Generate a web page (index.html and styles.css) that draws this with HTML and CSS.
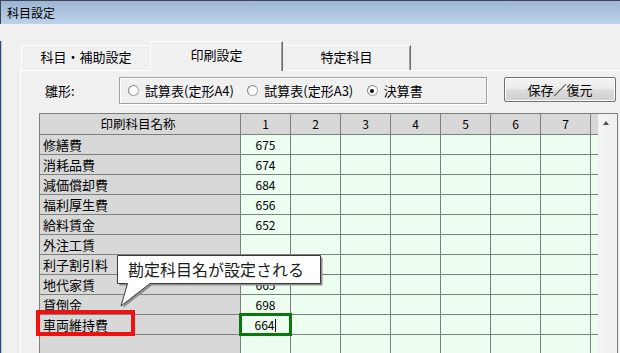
FILE: index.html
```html
<!DOCTYPE html>
<html lang="ja">
<head>
<meta charset="utf-8">
<title>科目設定</title>
<link rel="stylesheet" href="styles.css">
</head>
<body>
<div class="window">
  <div class="titlebar">科目設定</div>
  <div class="client">
    <div class="tabs">
      <div class="tab tab-first">科目・補助設定</div>
      <div class="tab tab-active">印刷設定</div>
      <div class="tab tab-last">特定科目</div>
    </div>
    <div class="panel">
      <div class="options">
        <div class="opt-label">雛形:</div>
        <div class="radio-group">
          <div class="radio"><span class="circle"></span>試算表(定形A4)</div>
          <div class="radio"><span class="circle"></span>試算表(定形A3)</div>
          <div class="radio"><span class="circle checked"></span>決算書</div>
        </div>
        <div class="button">保存／復元</div>
      </div>
      <div class="gridframe">
        <div class="cells">
          <div class="row head">
            <div class="c name">印刷科目名称</div>
            <div class="c">1</div><div class="c">2</div><div class="c">3</div><div class="c">4</div><div class="c">5</div><div class="c">6</div><div class="c">7</div><div class="c part"></div>
          </div>
          <div class="row"><div class="c name">修繕費</div><div class="c">675</div><div class="c"></div><div class="c"></div><div class="c"></div><div class="c"></div><div class="c"></div><div class="c"></div><div class="c part"></div></div>
          <div class="row"><div class="c name">消耗品費</div><div class="c">674</div><div class="c"></div><div class="c"></div><div class="c"></div><div class="c"></div><div class="c"></div><div class="c"></div><div class="c part"></div></div>
          <div class="row"><div class="c name">減価償却費</div><div class="c">684</div><div class="c"></div><div class="c"></div><div class="c"></div><div class="c"></div><div class="c"></div><div class="c"></div><div class="c part"></div></div>
          <div class="row"><div class="c name">福利厚生費</div><div class="c">656</div><div class="c"></div><div class="c"></div><div class="c"></div><div class="c"></div><div class="c"></div><div class="c"></div><div class="c part"></div></div>
          <div class="row"><div class="c name">給料賃金</div><div class="c">652</div><div class="c"></div><div class="c"></div><div class="c"></div><div class="c"></div><div class="c"></div><div class="c"></div><div class="c part"></div></div>
          <div class="row"><div class="c name">外注工賃</div><div class="c"></div><div class="c"></div><div class="c"></div><div class="c"></div><div class="c"></div><div class="c"></div><div class="c"></div><div class="c part"></div></div>
          <div class="row"><div class="c name">利子割引料</div><div class="c"></div><div class="c"></div><div class="c"></div><div class="c"></div><div class="c"></div><div class="c"></div><div class="c"></div><div class="c part"></div></div>
          <div class="row"><div class="c name">地代家賃</div><div class="c">665</div><div class="c"></div><div class="c"></div><div class="c"></div><div class="c"></div><div class="c"></div><div class="c"></div><div class="c part"></div></div>
          <div class="row"><div class="c name">貸倒金</div><div class="c">698</div><div class="c"></div><div class="c"></div><div class="c"></div><div class="c"></div><div class="c"></div><div class="c"></div><div class="c part"></div></div>
          <div class="row"><div class="c name">車両維持費</div><div class="c">664<span class="caret"></span></div><div class="c"></div><div class="c"></div><div class="c"></div><div class="c"></div><div class="c"></div><div class="c"></div><div class="c part"></div></div>
          <div class="row"><div class="c name"></div><div class="c"></div><div class="c"></div><div class="c"></div><div class="c"></div><div class="c"></div><div class="c"></div><div class="c"></div><div class="c part"></div></div>
          <div class="row"><div class="c name"></div><div class="c"></div><div class="c"></div><div class="c"></div><div class="c"></div><div class="c"></div><div class="c"></div><div class="c"></div><div class="c part"></div></div>
        </div>
        <div class="scrollbar"><span class="arrow-up"></span></div>
      </div>
    </div>
  </div>

  <div class="callout">
    <svg class="callout-shape" width="212" height="56" viewBox="0 0 212 56">
      <path d="M2.5,2.5 H205.5 V30.5 H35 L6,53 L12.5,30.5 H2.5 Z" fill="#8f8f8f"/>
      <path d="M0.5,0.5 H203.5 V28.5 H33 L4,51 L10.5,28.5 H0.5 Z" fill="#ffffff" stroke="#3a3a3a" stroke-width="1"/>
    </svg>
    <span class="callout-text">勘定科目名が設定される</span>
  </div>
  <div class="mark mark-red"></div>
  <div class="mark mark-green"></div>
</div>
</body>
</html>
```

FILE: styles.css
```css
html, body {
  margin: 0;
  padding: 0;
  overflow: hidden;
  background: #f0f0f0;
}

body {
  font-family: "Noto Sans CJK JP", "Noto Sans", sans-serif;
  color: #000;
}

.window {
  position: relative;
  width: 620px;
  height: 353px;
  overflow: hidden;
  background: #f0f0f0;
}

.titlebar {
  box-sizing: border-box;
  height: 24px;
  border-top: 1px solid #3c4656;
  border-left: 1px solid #3c4656;
  background: linear-gradient(#9cb5d2, #bdd2eb);
  font-size: 12px;
  line-height: 23px;
  padding-left: 6px;
}

.client {
  height: 329px;
  border-left: 1px solid #34496a;
  box-shadow: inset 1px 0 0 #b4c8e2;
}

.tabs {
  position: relative;
  z-index: 1;
  display: flex;
  align-items: flex-end;
  height: 30px;
  margin-top: 17px;
  margin-bottom: -1px;
  padding-left: 20px;
}

.tab {
  box-sizing: border-box;
  height: 25px;
  margin-bottom: 1px;
  border-top: 1px solid #ffffff;
  border-left: 1px solid #ffffff;
  background: #f0f0f0;
  font-size: 13px;
  line-height: 22px;
  text-align: center;
}

.tab-first {
  width: 129px;
}

.tab-active {
  width: 133px;
  height: 30px;
  margin-bottom: 0;
  line-height: 26px;
  border-right: 1px solid #6a6a6a;
  box-shadow: inset -1px 0 0 #a0a0a0;
}

.tab-last {
  width: 128px;
  border-left: none;
  border-right: 1px solid #6a6a6a;
  box-shadow: inset -1px 0 0 #a0a0a0;
}

.panel {
  margin-left: 19px;
  height: 300px;
  border-left: 1px solid #ffffff;
  border-top: 1px solid #ffffff;
  padding-top: 6px;
}

.options {
  display: flex;
  height: 27px;
}

.opt-label {
  box-sizing: border-box;
  width: 98px;
  padding-left: 24px;
  font-size: 13px;
  line-height: 27px;
}

.radio-group {
  box-sizing: border-box;
  width: 368px;
  height: 27px;
  border: 1px solid #a0a0a0;
  box-shadow: inset 1px 1px 0 #ffffff, 1px 1px 0 #ffffff;
  display: flex;
  align-items: center;
  padding-left: 8px;
}

.radio {
  width: 129px;
  display: flex;
  align-items: center;
  font-size: 13px;
  line-height: 18px;
  white-space: nowrap;
}

.circle {
  position: relative;
  box-sizing: border-box;
  width: 11px;
  height: 11px;
  margin-right: 6px;
  border-radius: 50%;
  border: 1px solid #a8a8a8;
  border-top-color: #8a8a8a;
  border-left-color: #8a8a8a;
  background: radial-gradient(circle at 60% 60%, #ffffff 40%, #e2e2e2 100%);
}

.circle.checked::after {
  content: "";
  position: absolute;
  left: 2.5px;
  top: 2.5px;
  width: 4px;
  height: 4px;
  border-radius: 50%;
  background: #111;
}

.button {
  box-sizing: border-box;
  margin-left: 17px;
  width: 112px;
  height: 25px;
  border: 1px solid #707070;
  border-radius: 2px;
  box-shadow: inset 0 0 0 1px #fbfbfb;
  background: linear-gradient(#f3f3f3 0%, #ebebeb 48%, #dcdcdc 52%, #cfcfcf 100%);
  font-size: 13px;
  line-height: 23px;
  text-align: center;
}

.gridframe {
  display: flex;
  width: 577px;
  margin-top: 9px;
  margin-left: 18px;
  border: 1px solid #7b817b;
  border-bottom: none;
}

.cells {
  width: 558px;
}

.row {
  display: flex;
  height: 20px;
}

.row.head {
  height: 21px;
}

.c {
  box-sizing: border-box;
  width: 50px;
  flex: none;
  border-right: 1px solid #7b817b;
  border-bottom: 1px solid #7b817b;
  background: #edfdf0;
  font-size: 12px;
  line-height: 19px;
  text-align: center;
  white-space: nowrap;
}

.c.name {
  width: 201px;
  padding-left: 3px;
  background: #d8d8d8;
  font-size: 13px;
  text-align: left;
}

.c.part {
  width: 7px;
  border-right: none;
}

.head .c {
  background: #d8d8d8;
  line-height: 20px;
  text-align: center;
}

.head .c.name {
  padding-left: 0;
  padding-right: 4px;
  font-size: 12.5px;
}

.caret {
  display: inline-block;
  width: 1px;
  height: 13px;
  margin-left: 1px;
  vertical-align: -2px;
  background: #000;
}

.scrollbar {
  width: 17px;
  background: linear-gradient(to right, #e6e6e6 0, #f6f6f6 1px, #f3f3f3 4px, #efefef 100%);
}

.arrow-up {
  display: block;
  width: 0;
  height: 0;
  margin: 7px 0 0 5px;
  border-left: 3.5px solid transparent;
  border-right: 3.5px solid transparent;
  border-bottom: 4px solid #4f4f4f;
}

.callout {
  position: absolute;
  left: 117px;
  top: 255px;
  width: 212px;
  height: 56px;
}

.callout-shape {
  display: block;
}

.callout-text {
  position: absolute;
  left: 11px;
  top: 0;
  font-size: 16px;
  line-height: 29px;
  color: #1c1c1c;
  white-space: nowrap;
}

.mark {
  position: absolute;
  box-sizing: border-box;
}

.mark-red {
  left: 36px;
  top: 310px;
  width: 99px;
  height: 26px;
  border: 4px solid #ee1111;
}

.mark-green {
  left: 239px;
  top: 313px;
  width: 53px;
  height: 23px;
  border: 3px solid #0a780a;
}
```
